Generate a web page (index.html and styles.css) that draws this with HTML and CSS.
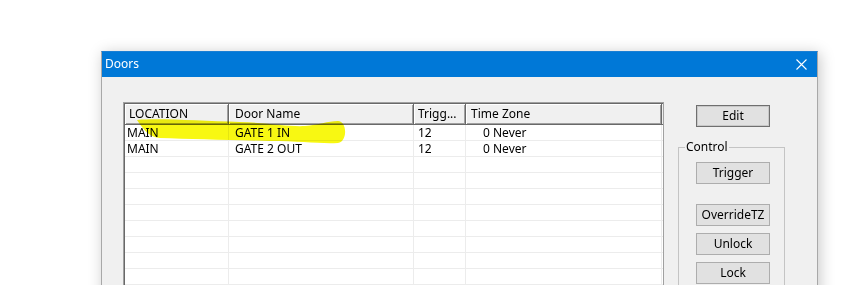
FILE: index.html
```html
<!DOCTYPE html>
<html>
<head>
<meta charset="utf-8">
<title>Doors</title>
<link rel="stylesheet" href="styles.css">
</head>
<body>
<div class="stage">
  <div class="window">
    <div class="titlebar">
      <span class="title">Doors</span>
      <svg class="close" width="11" height="11" viewBox="0 0 11 11"><path d="M0.5 0.5 L10.5 10.5 M10.5 0.5 L0.5 10.5" stroke="#fff" stroke-width="1.1" fill="none"/></svg>
    </div>
    <div class="client">
      <div class="list">
        <div class="list-inner">
          <div class="row head">
            <div class="hc c1">LOCATION</div>
            <div class="hc c2">Door Name</div>
            <div class="hc c3">Trigg...</div>
            <div class="hc c4">Time Zone</div>
          </div>
          <div class="row item"><div class="cell c1">MAIN</div><div class="cell c2">GATE 1 IN</div><div class="cell c3">12</div><div class="cell c4 tz">0 Never</div></div>
          <div class="row item"><div class="cell c1">MAIN</div><div class="cell c2">GATE 2 OUT</div><div class="cell c3">12</div><div class="cell c4 tz">0 Never</div></div>
          <div class="row item"><div class="cell c1"></div><div class="cell c2"></div><div class="cell c3"></div><div class="cell c4"></div></div>
          <div class="row item"><div class="cell c1"></div><div class="cell c2"></div><div class="cell c3"></div><div class="cell c4"></div></div>
          <div class="row item"><div class="cell c1"></div><div class="cell c2"></div><div class="cell c3"></div><div class="cell c4"></div></div>
          <div class="row item"><div class="cell c1"></div><div class="cell c2"></div><div class="cell c3"></div><div class="cell c4"></div></div>
          <div class="row item"><div class="cell c1"></div><div class="cell c2"></div><div class="cell c3"></div><div class="cell c4"></div></div>
          <div class="row item"><div class="cell c1"></div><div class="cell c2"></div><div class="cell c3"></div><div class="cell c4"></div></div>
          <div class="row item"><div class="cell c1"></div><div class="cell c2"></div><div class="cell c3"></div><div class="cell c4"></div></div>
          <div class="row item"><div class="cell c1"></div><div class="cell c2"></div><div class="cell c3"></div><div class="cell c4"></div></div>
          <div class="row item"><div class="cell c1"></div><div class="cell c2"></div><div class="cell c3"></div><div class="cell c4"></div></div>
        </div>
        <svg class="marker" width="541" height="200" viewBox="123 102 541 200">
          <path d="M137,120 C160,118 200,121 240,122 C270,123 290,127 305,126 C318,125 328,121 338,121 C347,121 348,141 338,143 C320,144 300,141 270,141 C230,140 190,139 160,138 C150,137 145,132 137,120 Z" fill="#f8f812"/>
        </svg>
      </div>
      <div class="side">
        <button class="btn default">Edit</button>
        <fieldset class="group">
          <legend>Control</legend>
          <button class="btn">Trigger</button>
          <button class="btn gap-lg">OverrideTZ</button>
          <button class="btn gap-sm">Unlock</button>
          <button class="btn gap-sm">Lock</button>
        </fieldset>
      </div>
    </div>
  </div>
</div>
</body>
</html>
```
FILE: styles.css
```css
html, body {
  margin: 0;
  padding: 0;
  background: #ffffff;
  overflow: hidden;
}
body {
  font-family: "Noto Sans", "DejaVu Sans", sans-serif;
  font-size: 12px;
  color: #000;
}
.stage {
  padding: 51px 0 0 101px;
}
.window {
  width: 717px;
  height: 300px;
  box-sizing: border-box;
  border: 1px solid #a8a8a8;
  border-top-color: #1a7fd4;
  background: #f0f0f0;
  box-shadow: 2px 2px 14px rgba(0, 0, 0, 0.22);
  display: flex;
  flex-direction: column;
}
.titlebar {
  height: 25px;
  background: #0078d7;
  color: #fff;
  display: flex;
  align-items: center;
  padding: 0 10px 0 3px;
}
.title {
  font-size: 12px;
  line-height: 1;
  margin-top: -1px;
}
.close {
  margin-left: auto;
  margin-top: -1px;
}
.client {
  flex: 1;
  display: flex;
  align-items: flex-start;
  padding: 25px 0 0 21px;
}
.list {
  position: relative;
  width: 541px;
  height: 220px;
  box-sizing: border-box;
  border: 1px solid #a0a0a0;
  background: #fff;
}
.list-inner {
  border-left: 1px solid #696969;
  border-top: 1px solid #696969;
  height: 100%;
  box-sizing: border-box;
}
.row {
  display: grid;
  grid-template-columns: 104px 185px 52px 196px;
}
.head {
  height: 20px;
  background: #f0f0f0;
  border-bottom: 1px solid #696969;
}
.hc {
  box-sizing: border-box;
  height: 20px;
  line-height: 19px;
  padding-left: 4px;
  border-right: 1px solid #696969;
  box-shadow: inset 1px 1px 0 #ffffff, inset -1px -1px 0 #a0a0a0;
  white-space: nowrap;
  overflow: hidden;
}
.hc.c2 { padding-left: 6px; }
.hc.c3 { padding-left: 4px; }
.hc.c4 { padding-left: 5px; }
.item {
  height: 16px;
  box-sizing: border-box;
  border-bottom: 1px solid #ececec;
}
.cell {
  box-sizing: border-box;
  height: 15px;
  line-height: 15px;
  border-right: 1px solid #ececec;
  white-space: nowrap;
}
.cell.c1 { padding-left: 2px; }
.cell.c2 { padding-left: 6px; }
.cell.c3 { padding-left: 4px; }
.cell.tz { padding-left: 17px; }
.marker {
  position: absolute;
  left: -1px;
  top: -1px;
  mix-blend-mode: multiply;
  pointer-events: none;
}
.side {
  margin-left: 14px;
  display: flex;
  flex-direction: column;
  align-items: flex-start;
}
.btn {
  font-family: "Noto Sans", "DejaVu Sans", sans-serif;
  font-size: 12px;
  color: #000;
  width: 74px;
  height: 22px;
  padding: 0;
  background: #e1e1e1;
  border: 1px solid #adadad;
  border-radius: 0;
  line-height: 18px;
}
.btn.default {
  margin: 3px 0 0 18px;
  border: 1px solid #6f6f6f;
  box-shadow: inset 0 0 0 1px #c8c8c8;
}
.group {
  margin: 13px 0 0 0;
  padding: 8px 0 0 17px;
  width: 107px;
  height: 160px;
  box-sizing: border-box;
  border: 1px solid #c4c4c4;
  display: flex;
  flex-direction: column;
  align-items: flex-start;
  min-inline-size: 0;
}
.group legend {
  padding: 0 1px;
  margin-left: -11px;
  font-size: 12px;
  line-height: 14px;
}
.gap-lg { margin-top: 20px; }
.gap-sm { margin-top: 7px; }
```
